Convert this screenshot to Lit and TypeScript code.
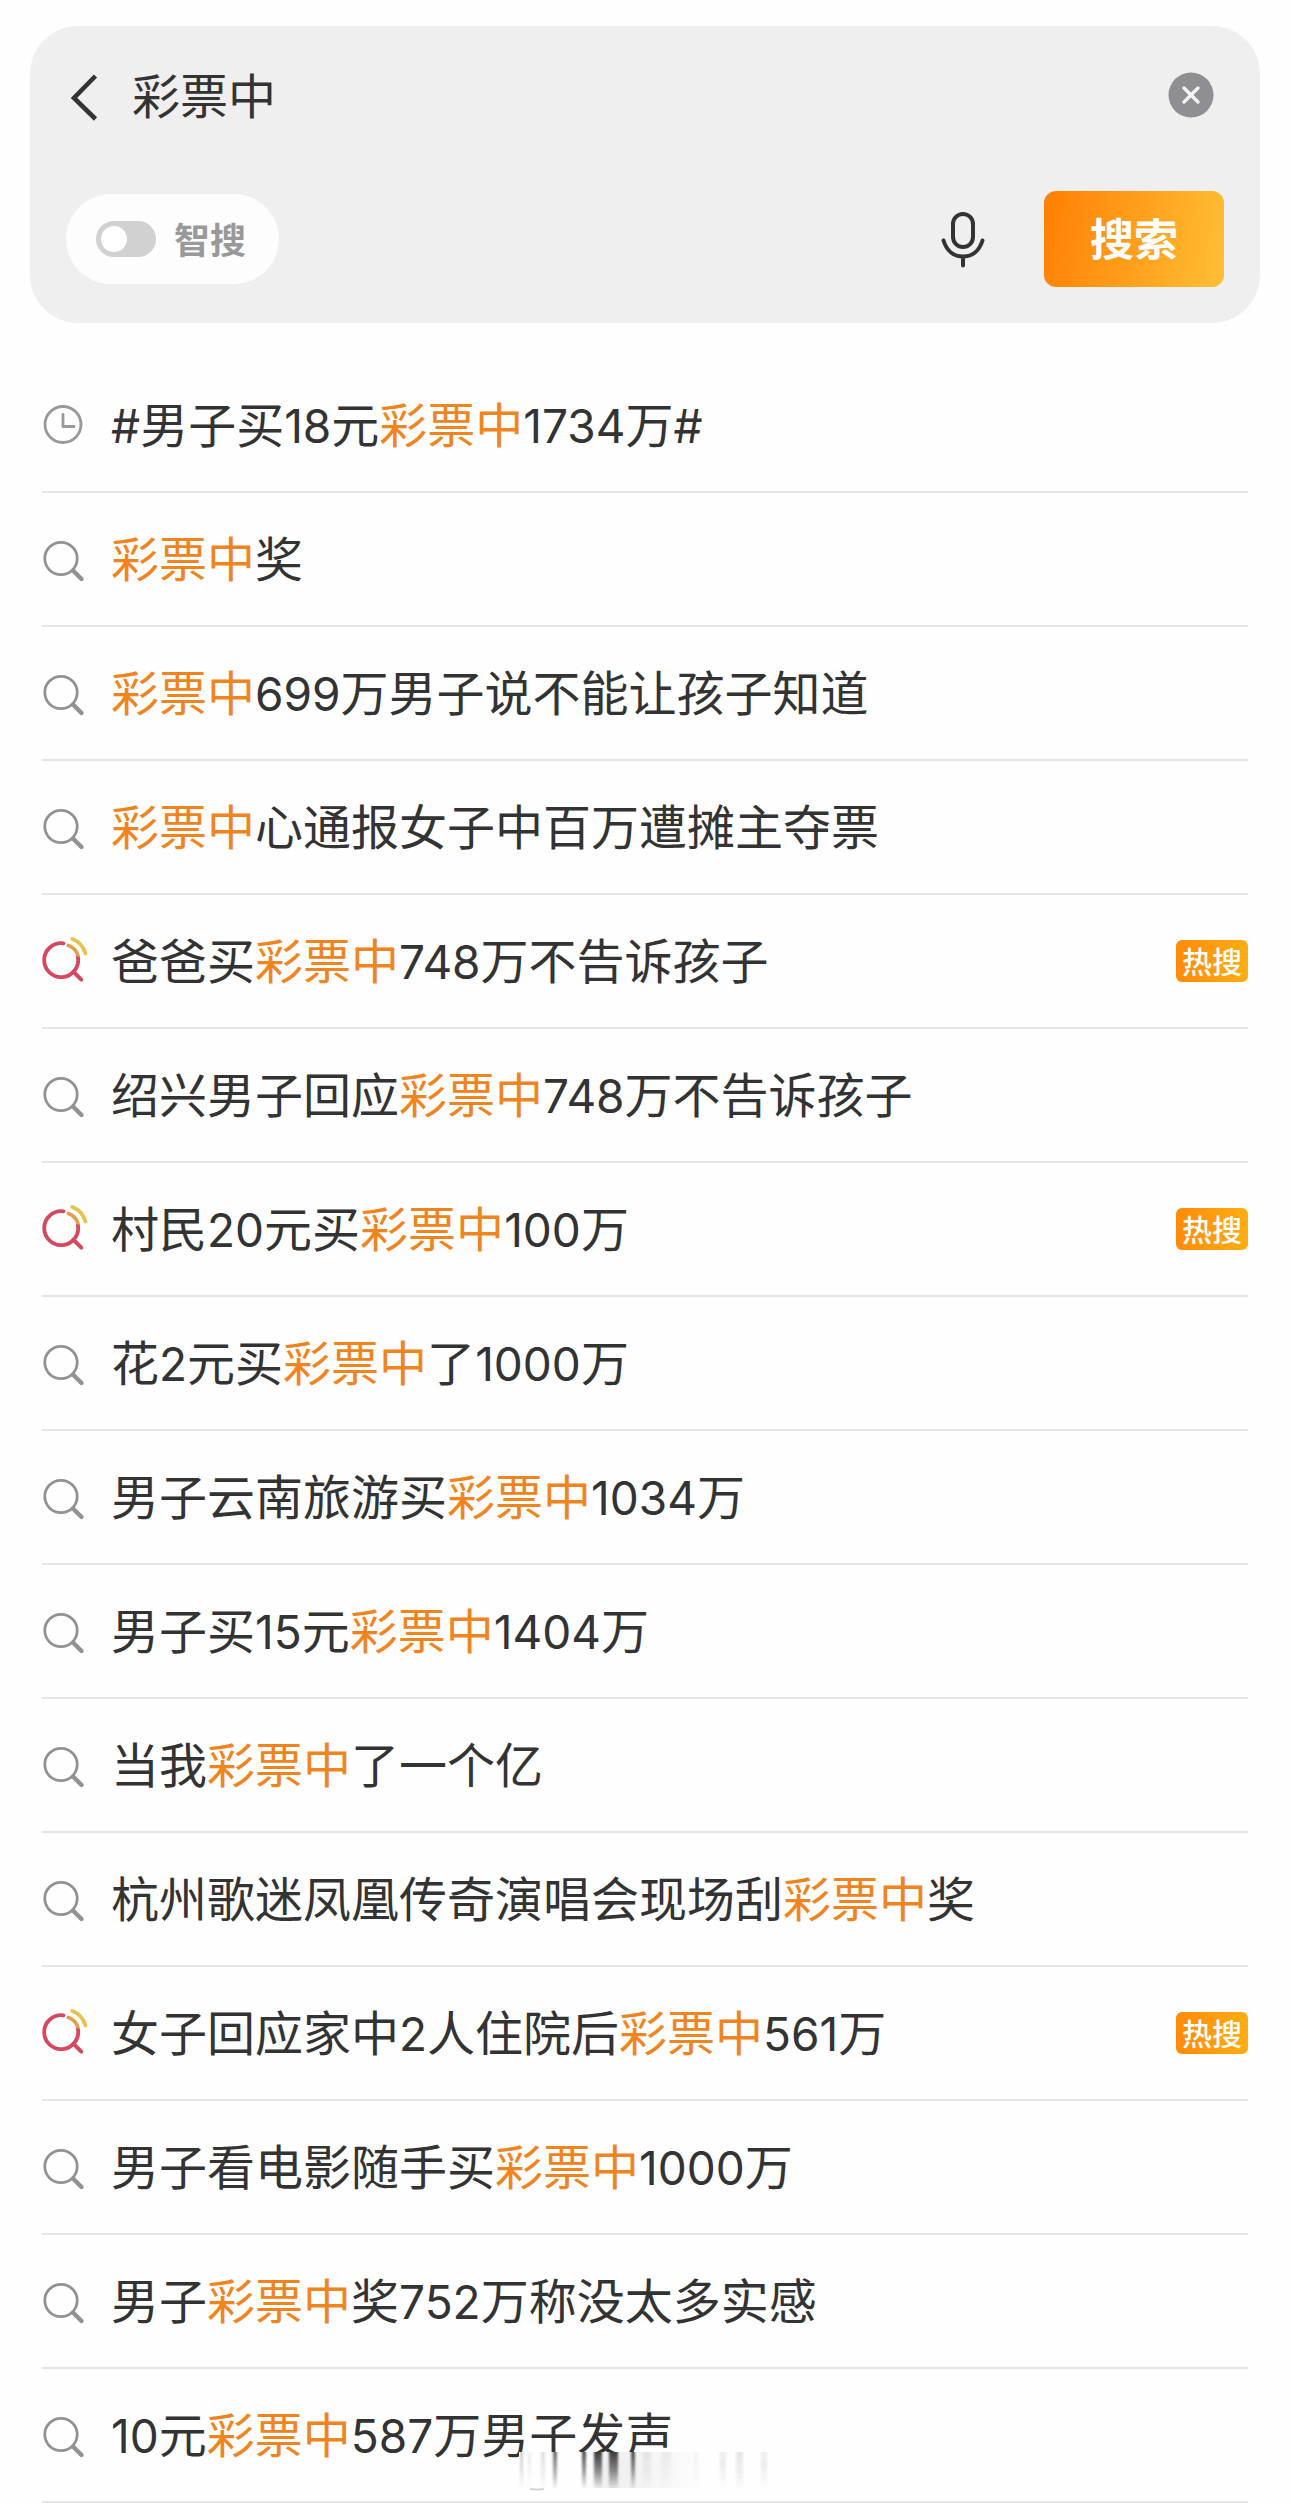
import { LitElement, html, css, svg } from "lit";
import { customElement, property, state } from "lit/decorators.js";

type Kind = "history" | "search" | "hot";

interface Suggestion {
  text: string;
  kind: Kind;
}

const SUGGESTIONS: Suggestion[] = [
  { text: "#男子买18元彩票中1734万#", kind: "history" },
  { text: "彩票中奖", kind: "search" },
  { text: "彩票中699万男子说不能让孩子知道", kind: "search" },
  { text: "彩票中心通报女子中百万遭摊主夺票", kind: "search" },
  { text: "爸爸买彩票中748万不告诉孩子", kind: "hot" },
  { text: "绍兴男子回应彩票中748万不告诉孩子", kind: "search" },
  { text: "村民20元买彩票中100万", kind: "hot" },
  { text: "花2元买彩票中了1000万", kind: "search" },
  { text: "男子云南旅游买彩票中1034万", kind: "search" },
  { text: "男子买15元彩票中1404万", kind: "search" },
  { text: "当我彩票中了一个亿", kind: "search" },
  { text: "杭州歌迷凤凰传奇演唱会现场刮彩票中奖", kind: "search" },
  { text: "女子回应家中2人住院后彩票中561万", kind: "hot" },
  { text: "男子看电影随手买彩票中1000万", kind: "search" },
  { text: "男子彩票中奖752万称没太多实感", kind: "search" },
  { text: "10元彩票中587万男子发声", kind: "search" },
];

// All three icons share one 46x46 canvas so that rows line up.
const ICONS = {
  history: svg`
    <g fill="none" stroke="#999" stroke-width="2.8" stroke-linecap="round" stroke-linejoin="round">
      <circle cx="21" cy="22.5" r="18"/>
      <path d="M21 12.5V24.5H32"/>
    </g>`,
  search: svg`
    <g fill="none" stroke="#929292" stroke-linecap="round">
      <circle cx="19" cy="22.5" r="16.2" stroke-width="2.8"/>
      <path d="M31 34.500L39.500 43" stroke-width="4.400"/>
    </g>`,
  hot: svg`
    <g fill="none" stroke-linecap="round">
      <path d="M21.500 5.300A17 17 0 1 0 35.800 18.500" stroke="#d5495f" stroke-width="3.800"/>
      <path d="M31.300 33.700L39.300 41.600" stroke="#d5495f" stroke-width="4"/>
      <path d="M26.300 7.500Q33.500 10 35.800 17" stroke="#e0a04c" stroke-width="3.600"/>
      <path d="M30.300 1Q40 4.500 43.500 15.500" stroke="#e6c24f" stroke-width="3.800"/>
    </g>`,
};

@customElement("suggestion-row")
export class SuggestionRow extends LitElement {
  @property() text = "";
  @property() query = "";
  @property() kind: Kind = "search";

  static styles = css`
    :host {
      display: block;
    }
    .row {
      display: flex;
      align-items: center;
      height: 132px;
      border-bottom: 2px solid #e5e5e5;
      color: #333;
      text-decoration: none;
    }
    .icon {
      flex: none;
      width: 46px;
      height: 46px;
      margin-right: 23px;
      overflow: visible;
    }
    .text {
      flex: 1;
      min-width: 0;
      padding-bottom: 6px;
      font-size: 48px;
      line-height: 68px;
      white-space: nowrap;
    }
    .num {
      font-family: Inter, "Noto Sans CJK SC", sans-serif;
      font-size: 46px;
      line-height: 46px;
    }
    .match {
      color: #f0851f;
    }
    .tag {
      flex: none;
      padding: 0 6px 2px;
      border-radius: 6px;
      background: linear-gradient(90deg, #ff8a0a, #ffae12);
      color: #fff;
      font-size: 30px;
      font-weight: 500;
      line-height: 40px;
    }
  `;

  private latin(part: string) {
    return part
      .split(/([0-9#]+)/)
      .filter(Boolean)
      .map((s) => (/^[0-9#]/.test(s) ? html`<span class="num">${s}</span>` : s));
  }

  render() {
    const at = this.query ? this.text.indexOf(this.query) : -1;
    const end = at + this.query.length;
    return html`<a class="row" href="#search"
      ><svg class="icon" viewBox="0 0 46 46" aria-hidden="true">${ICONS[this.kind]}</svg
      ><span class="text"
        >${at < 0
          ? this.latin(this.text)
          : html`${this.latin(this.text.slice(0, at))}<span class="match">${this.query}</span>${this.latin(
              this.text.slice(end)
            )}`}</span
      >${this.kind === "hot" ? html`<span class="tag">热搜</span>` : null}</a
    >`;
  }
}

@customElement("app-root")
export class AppRoot extends LitElement {
  @state() private query = "彩票中";

  static styles = css`
    :host {
      display: block;
      background: #fefefe;
      font-family: "Noto Sans CJK SC", sans-serif;
      color: #333;
    }
    .panel {
      display: flex;
      flex-direction: column;
      gap: 56px;
      margin: 0 30px;
      padding: 33px 36px 36px;
      border-radius: 48px;
      background: #efefef;
    }
    .page {
      padding-top: 26px;
    }
    .line {
      display: flex;
      align-items: center;
    }
    button {
      flex: none;
      margin: 0;
      padding: 0;
      border: 0;
      background: none;
      font-family: inherit;
      cursor: pointer;
    }
    button svg {
      display: block;
    }
    .query {
      flex: 1;
      box-sizing: border-box;
      min-width: 0;
      height: 76px;
      margin: 0;
      padding: 0 0 8px;
      border: 0;
      outline: 0;
      background: none;
      color: #333;
      font-family: inherit;
      font-size: 48px;
    }
    .back {
      width: 66px;
    }
    .clear {
      margin-right: 10px;
      padding-bottom: 4px;
    }
    .smart {
      display: flex;
      align-items: center;
      gap: 18px;
      height: 90px;
      margin-right: auto;
      padding: 0 33px 0 30px;
      border-radius: 45px;
      background: #fdfdfd;
      color: #999;
      font-size: 36px;
      font-weight: 700;
      line-height: 52px;
    }
    .smart span {
      padding-bottom: 2px;
    }
    .switch {
      appearance: none;
      display: flex;
      align-items: center;
      width: 60px;
      height: 36px;
      margin: 0;
      padding: 0 5px;
      border-radius: 18px;
      background: #d1d1d1;
    }
    .switch::before {
      content: "";
      width: 26px;
      height: 26px;
      border-radius: 50%;
      background: #fff;
    }
    .switch:checked {
      justify-content: flex-end;
      background: #ff9d1a;
    }
    .mic {
      margin-right: 57px;
    }
    .submit {
      width: 180px;
      height: 96px;
      padding-bottom: 4px;
      border-radius: 12px;
      background: linear-gradient(100deg, #ff8205 5%, #ffbe34 98%);
      color: #fff;
      font-size: 44px;
      font-weight: 700;
    }
    .list {
      position: relative;
      margin: 36px 42px 0;
      padding: 0;
      list-style: none;
    }
    .smear {
      position: absolute;
      left: 476px;
      bottom: 12px;
      width: 252px;
      height: 40px;
      pointer-events: none;
    }
  `;

  private onInput(e: Event) {
    this.query = (e.target as HTMLInputElement).value;
  }

  render() {
    // x, width and strength of each faded vertical streak under the last row
    const streaks = [
      [2, 3, 0.25],
      [10, 3, 0.08],
      [23, 4, 0.15],
      [35, 4, 0.7],
      [64, 4, 0.85],
      [76, 8, 0.95],
      [91, 9, 0.95],
      [113, 4, 0.85],
      [125, 8, 0.07],
      [143, 10, 0.05],
      [176, 4, 0.04],
      [202, 6, 0.09],
      [218, 7, 0.12],
      [243, 6, 0.09],
    ];
    return html`
      <div class="page">
        <form class="panel" @submit=${(e: Event) => e.preventDefault()}>
          <div class="line">
            <button class="back" type="button" aria-label="返回">
              <svg width="36" height="48" viewBox="0 0 36 48" aria-hidden="true">
                <path d="M29.500 3L8 25L29.500 46" fill="none" stroke="#333" stroke-width="4.600" />
              </svg>
            </button>
            <input class="query" type="text" aria-label="搜索" .value=${this.query} @input=${this.onInput} />
            <button class="clear" type="button" aria-label="清除" @click=${() => (this.query = "")}>
              <svg width="46" height="46" viewBox="0 0 46 46" aria-hidden="true">
                <circle cx="23" cy="23" r="22.500" fill="#8e8e93" />
                <path d="M16 16L30 30M30 16L16 30" stroke="#f4f4f4" stroke-width="3.400" stroke-linecap="round" />
              </svg>
            </button>
          </div>
          <div class="line">
            <label class="smart"><input class="switch" type="checkbox" role="switch" /><span>智搜</span></label>
            <button class="mic" type="button" aria-label="语音搜索">
              <svg width="48" height="60" viewBox="0 0 48 60" fill="none" stroke="#333" stroke-width="4" stroke-linecap="round" aria-hidden="true">
                <rect x="14" y="5" width="20" height="33" rx="10" />
                <path d="M4.500 31.500C8 43 16 47.500 24 47.500S40 43 43.500 31.500M24 47.500V56.500" />
              </svg>
            </button>
            <button class="submit" type="submit">搜索</button>
          </div>
        </form>
        <ul class="list">
          ${SUGGESTIONS.map(
            (s) => html`<li>
              <suggestion-row .text=${s.text} .kind=${s.kind} .query=${this.query}></suggestion-row>
            </li>`
          )}
          <li class="smear" aria-hidden="true">
            <svg width="252" height="40" viewBox="0 0 252 40">
              <defs>
                <linearGradient id="fade" x1="0" y1="0" x2="0" y2="1">
                  <stop offset="0" stop-color="#333" />
                  <stop offset="0.500" stop-color="#333" stop-opacity="0.600" />
                  <stop offset="1" stop-color="#333" stop-opacity="0.060" />
                </linearGradient>
                <linearGradient id="haze" x1="0" y1="0" x2="1" y2="0">
                  <stop offset="0" stop-color="#333" stop-opacity="0" />
                  <stop offset="0.200" stop-color="#333" stop-opacity="0.080" />
                  <stop offset="1" stop-color="#333" stop-opacity="0" />
                </linearGradient>
                <filter id="soft" x="-5%" width="110%" y="0" height="100%">
                  <feGaussianBlur stdDeviation="1.200 0" />
                </filter>
              </defs>
              <rect x="1" y="1" width="250" height="38" fill="#fefefe" />
              <rect x="68" y="1" width="120" height="36" fill="url(#haze)" />
              <g filter="url(#soft)">
                ${streaks.map(
                  ([x, w, o]) => svg`<rect x=${x} y="1" width=${w} height="36" fill="url(#fade)" opacity=${o}/>`
                )}
              </g>
              <path d="M12 38Q18 39 26 38" fill="none" stroke="#ccc" stroke-width="1.500" />
            </svg>
          </li>
        </ul>
      </div>
    `;
  }
}
